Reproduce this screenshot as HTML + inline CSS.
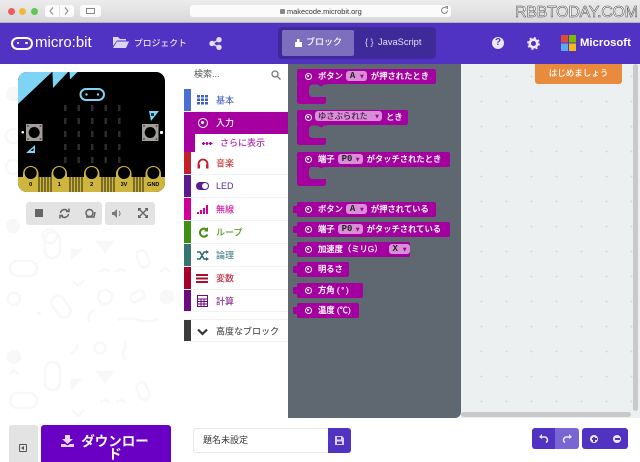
<!DOCTYPE html>
<html><head><meta charset="utf-8">
<style>
*{box-sizing:border-box}
html,body{margin:0;padding:0;width:640px;height:462px;overflow:hidden;background:#fff;font-family:"Liberation Sans","Noto Sans CJK JP",sans-serif}
.a{position:absolute}
.ti{position:absolute;left:184px;width:104px;border-bottom:1px solid #f3f3f3;background:#fff;font-size:9px;font-weight:500}
.ti .bar{position:absolute;left:0;top:0;bottom:0;width:7px}
.ti .t{position:absolute;left:32px;top:50%;transform:translateY(-50%);white-space:nowrap}
.ti svg{position:absolute;left:12px;top:4px}
.blk{position:absolute;left:297px;height:15px;background:#a400a0;color:#fff;font-size:8.3px;font-weight:500;line-height:15px;white-space:nowrap;border-radius:2px;-webkit-text-stroke:.15px #fff}
.blk .ic{position:absolute;left:8px;top:4px;width:7px;height:7px;border:1.1px solid #fff;border-radius:50%}
.blk .ic:after{content:"";position:absolute;left:1.4px;top:1.4px;width:2px;height:2px;border-radius:50%;background:#fff}
.blk .t{position:absolute;left:21px;top:0}
.blk.o:before{content:"";position:absolute;left:-4px;top:4px;width:4px;height:7px;background:#a400a0;border-radius:1px 0 0 1px}
.dd{display:inline-block;position:relative;background:#d98fd6;color:#222;border-radius:3px;height:10px;line-height:10px;width:21px;padding-left:4px;font-family:"Liberation Mono",monospace;font-size:9px;margin:0 4px 0 3px;vertical-align:1px;font-weight:bold;-webkit-text-stroke:0}
.dd i{position:absolute;right:3px;top:1px;font-style:normal;color:#a400a0;font-size:5px;font-family:"DejaVu Sans",sans-serif;font-weight:normal}
.cs{position:absolute;left:297px}
.gray{position:absolute;background:#e3e3e3;border-radius:3px}
</style></head><body>

<!-- background doodles left -->
<svg class="a" style="left:0;top:0" width="184" height="462" fill="none" stroke="#f8f8f8" stroke-width="2.500">
<circle cx="13" cy="94" r="6" fill="#f8f8f8"/><circle cx="13" cy="136" r="7"/><circle cx="13" cy="167" r="7"/>
<circle cx="13" cy="226" r="6" fill="#f8f8f8"/><circle cx="50" cy="236" r="7"/>
<rect x="45" y="232" width="15" height="26" rx="7.500"/><rect x="10" y="261" width="27" height="15" rx="7.500"/>
<path d="M72 280l6 6 6-6M100 272q5-5 10 0M116 272q5-5 10 0"/>
<path d="M72 250h8l-8 8zM98 242h14l-7 10z" fill="#f8f8f8"/>
<rect x="138" y="250" width="10" height="18" rx="5" transform="rotate(-20 143 259)"/>
<path d="M160 272l5-4 5 4" />
<circle cx="14" cy="299" r="6"/>
<rect x="54" y="295" width="13" height="24" rx="6.500" transform="rotate(-35 60 306)"/>
<path d="M37 312l4 3"/>
<circle cx="105" cy="297" r="7"/>
<rect x="130" y="292" width="15" height="9" rx="4.500" transform="rotate(-30 137 297)"/>
<circle cx="167" cy="297" r="6" fill="#f8f8f8"/>
<path d="M95 310q-8 3-6 12M118 320q10-3 20 0t20-1"/>
<path d="M78 344q-2 8-8 10M124 340q3 6 0 10t2 10"/>
<circle cx="100" cy="348" r="5.500"/>
<circle cx="14" cy="357" r="6" fill="#f8f8f8"/><path d="M10 374l4-4 4 4"/>
<rect x="45" y="362" width="15" height="28" rx="7.500"/>
<path d="M72 380h8l-8 8zM98 372h14l-7 10z" fill="#f8f8f8"/>
<rect x="138" y="382" width="10" height="18" rx="5" transform="rotate(-20 143 391)"/>
<rect x="10" y="393" width="27" height="15" rx="7.500"/>
<path d="M72 410l6 6 6-6M100 403q5-5 10 0M116 403q5-5 10 0"/>
</svg>

<!-- safari bar -->
<div class="a" style="left:0;top:0;width:640px;height:23px;background:linear-gradient(#ececec,#d8d8d8);border-bottom:1px solid #b5b5b5"></div>
<div class="a" style="left:7.500px;top:7.500px;width:7px;height:7px;border-radius:50%;background:#ee5a5e"></div>
<div class="a" style="left:19px;top:7.500px;width:7px;height:7px;border-radius:50%;background:#f0b93a"></div>
<div class="a" style="left:30.500px;top:7.500px;width:7px;height:7px;border-radius:50%;background:#5fc650"></div>
<div class="a" style="left:45px;top:5px;width:29px;height:12px;background:#fbfbfb;border-radius:3px"></div>
<svg class="a" style="left:45px;top:5px" width="29" height="12" fill="none" stroke="#888" stroke-width="1"><path d="M8 2.500L5 6l3 3.500M20 2.500L23 6l-3 3.500"/><path d="M14.500 0v12" stroke="#e2e2e2"/></svg>
<div class="a" style="left:80px;top:5px;width:21px;height:12px;background:#fbfbfb;border-radius:3px"><div class="a" style="left:6px;top:3px;width:9px;height:6px;border:1px solid #888"></div></div>
<div class="a" style="left:190px;top:5px;width:261px;height:12px;background:#fbfbfb;border-radius:3px"></div>
<div class="a" style="left:280px;top:8.500px;width:5px;height:5px;background:#888;border-radius:1px"></div>
<div class="a" style="left:287px;top:5px;font-size:7.400px;line-height:13px;color:#333;white-space:nowrap">makecode.microbit.org</div>
<svg class="a" style="left:440px;top:6px" width="9" height="9" fill="none" stroke="#888" stroke-width="1"><path d="M7.500 4.500a3 3 0 1 1-1-2.300"/><path d="M5.500 0.500h2v2.500" /></svg>
<div class="a" style="left:515px;top:5px;width:125px;font-size:16px;line-height:16px;color:#fff;white-space:nowrap;-webkit-text-stroke:.5px #444;letter-spacing:-.3px">RBBTODAY.COM</div>

<!-- purple header -->
<div class="a" style="left:0;top:23px;width:640px;height:41px;background:#5133c4"></div>
<div class="a" style="left:11px;top:37px;width:22px;height:13px;border:2.200px solid #fff;border-radius:6.500px"><div class="a" style="left:3.500px;top:3px;width:2.400px;height:2.400px;background:#fff;border-radius:50%"></div><div class="a" style="right:3.500px;top:3px;width:2.400px;height:2.400px;background:#fff;border-radius:50%"></div></div>
<div class="a" style="left:35px;top:33px;font-size:15px;line-height:20px;color:#fff">micro:bit</div>
<svg class="a" style="left:113px;top:37px" width="16" height="11" fill="#dcd6f5"><path d="M0 0h5l2 2h6v1.500H4L0 9zM4 4.500h12L13 11H0z"/></svg>
<div class="a" style="left:134px;top:36px;font-size:8.800px;line-height:14px;color:#e4dff8;font-weight:500">プロジェクト</div>
<svg class="a" style="left:209px;top:37px" width="13" height="13" fill="#e4dff8" stroke="#e4dff8"><circle cx="3" cy="6.500" r="2.200"/><circle cx="10" cy="2.700" r="2.200"/><circle cx="10" cy="10.300" r="2.200"/><path d="M3 6.500L10 2.700M3 6.500L10 10.300" stroke-width="1.400"/></svg>

<div class="a" style="left:278px;top:27px;width:158px;height:32px;background:#3f2a99;border-radius:4px"></div>
<div class="a" style="left:282px;top:30px;width:72px;height:26px;background:#7d6fbd;border-radius:2px"></div>
<svg class="a" style="left:295px;top:39px" width="7" height="8" fill="#fff"><path d="M0 3h2V0h2.500v3H7v5H0z"/></svg>
<div class="a" style="left:306px;top:36px;font-size:9px;line-height:13px;color:#fff;font-weight:500">ブロック</div>
<div class="a" style="left:365px;top:36px;font-size:9px;line-height:13px;color:#dcd6f5;white-space:nowrap">{ }</div>
<div class="a" style="left:378px;top:36px;font-size:9.300px;line-height:13px;color:#e4dff8;white-space:nowrap">JavaScript</div>

<div class="a" style="left:492px;top:37px;width:12px;height:12px;border-radius:50%;background:#ede9fb;color:#5133c4;font-size:10px;font-weight:bold;line-height:12px;text-align:center">?</div>
<svg class="a" style="left:527px;top:37px" width="13" height="13"><circle cx="6.500" cy="6.500" r="3.800" fill="none" stroke="#ede9fb" stroke-width="2.600"/><circle cx="6.500" cy="6.500" r="5.200" fill="none" stroke="#ede9fb" stroke-width="2.400" stroke-dasharray="2 2.100"/></svg>
<svg class="a" style="left:561px;top:35px" width="15" height="16"><rect width="7" height="7.500" fill="#e04a3a"/><rect x="8" width="7" height="7.500" fill="#7fba00"/><rect y="8.500" width="7" height="7.500" fill="#5aa9ee"/><rect x="8" y="8.500" width="7" height="7.500" fill="#f5ba14"/></svg>
<div class="a" style="left:580px;top:34px;font-size:11.300px;line-height:18px;color:#fff;font-weight:bold">Microsoft</div>

<!-- workspace -->
<div class="a" style="left:461px;top:64px;width:179px;height:354px;background-color:#ecf0f1;background-image:radial-gradient(#d6dadb .8px,transparent 1.100px);background-size:25px 25px;background-position:8px 0"></div>
<div class="a" style="left:535px;top:64px;width:87px;height:20px;background:#e98b3c;border-radius:0 0 3px 3px;color:#fff;font-size:8.500px;font-weight:500;line-height:19px;text-align:center">はじめましょう</div>
<div class="a" style="left:461px;top:412px;width:170px;height:5px;background:#c9c9c9;border-radius:3px"></div>
<div class="a" style="left:633px;top:64px;width:5px;height:347px;background:#c9c9c9;border-radius:3px"></div>

<!-- flyout -->
<div class="a" style="left:288px;top:64px;width:173px;height:354px;background:#5f6770;border-radius:0 0 6px 0"></div>

<!-- board -->
<svg class="a" style="left:18px;top:72px" width="148" height="122" font-family="Liberation Sans" font-weight="bold" font-size="5.500">
<defs><clipPath id="cp"><rect width="147" height="120" rx="9"/></clipPath></defs>
<g clip-path="url(#cp)">
<rect width="147" height="120" fill="#000"/>
<path d="M0 0h34L0 32zM34.500 0H50L35 16zM51.500 0h8L52 7.500z" fill="#7fd4f5"/>
<path d="M0 105h147v15H0z" fill="#cdb53f"/>
<g stroke="#000" stroke-width=".8"><path d="M21 105v15M24 105v15M27 105v15M30 105v15M33 105v15M52 105v15M55 105v15M58 105v15M61 105v15M64 105v15M84 105v15M87 105v15M90 105v15M93 105v15M96 105v15M116 105v15M119 105v15M122 105v15M125 105v15"/></g>
<g fill="#cdb53f"><rect x="5" y="94" width="15.500" height="26" rx="7.700"/><rect x="33.500" y="94" width="15.500" height="26" rx="7.700"/><rect x="66" y="94" width="15.500" height="26" rx="7.700"/><rect x="98" y="94" width="15.500" height="26" rx="7.700"/><rect x="127.500" y="94" width="15.500" height="26" rx="7.700"/></g>
<g fill="#000"><circle cx="12.700" cy="101" r="6"/><circle cx="41.300" cy="101" r="6"/><circle cx="73.700" cy="101" r="6"/><circle cx="106" cy="101" r="6"/><circle cx="135.300" cy="101" r="6"/></g>
<g fill="#000" text-anchor="middle"><text x="12.700" y="114">0</text><text x="41.300" y="114">1</text><text x="73.700" y="114">2</text><text x="106" y="114">3V</text><text x="135.300" y="114">GND</text></g>
</g>
<rect x="62.500" y="17" width="23.500" height="11" rx="5.500" fill="none" stroke="#7fd4f5" stroke-width="2"/>
<circle cx="68.500" cy="22.500" r="1.200" fill="#7fd4f5"/><circle cx="80" cy="22.500" r="1.200" fill="#7fd4f5"/>
<g fill="#2c2c2c"><rect x="46" y="33" width="2.500" height="6"/><rect x="59.500" y="33" width="2.500" height="6"/><rect x="73" y="33" width="2.500" height="6"/><rect x="86.500" y="33" width="2.500" height="6"/><rect x="100" y="33" width="2.500" height="6"/><rect x="46" y="46" width="2.500" height="6"/><rect x="59.500" y="46" width="2.500" height="6"/><rect x="73" y="46" width="2.500" height="6"/><rect x="86.500" y="46" width="2.500" height="6"/><rect x="100" y="46" width="2.500" height="6"/><rect x="46" y="59" width="2.500" height="6"/><rect x="59.500" y="59" width="2.500" height="6"/><rect x="73" y="59" width="2.500" height="6"/><rect x="86.500" y="59" width="2.500" height="6"/><rect x="100" y="59" width="2.500" height="6"/><rect x="46" y="72" width="2.500" height="6"/><rect x="59.500" y="72" width="2.500" height="6"/><rect x="73" y="72" width="2.500" height="6"/><rect x="86.500" y="72" width="2.500" height="6"/><rect x="100" y="72" width="2.500" height="6"/><rect x="46" y="85" width="2.500" height="6"/><rect x="59.500" y="85" width="2.500" height="6"/><rect x="73" y="85" width="2.500" height="6"/><rect x="86.500" y="85" width="2.500" height="6"/><rect x="100" y="85" width="2.500" height="6"/></g>
<rect x="8" y="52" width="16.500" height="17" fill="#a29e9b"/><circle cx="16.200" cy="60.500" r="5.500" fill="#000"/>
<g fill="#6d4a46"><circle cx="10" cy="54" r="1"/><circle cx="22.500" cy="54" r="1"/><circle cx="10" cy="67" r="1"/><circle cx="22.500" cy="67" r="1"/></g>
<rect x="124" y="52" width="16.500" height="17" fill="#a29e9b"/><circle cx="132.200" cy="60.500" r="5.500" fill="#000"/>
<g fill="#6d4a46"><circle cx="126" cy="54" r="1"/><circle cx="138.500" cy="54" r="1"/><circle cx="126" cy="67" r="1"/><circle cx="138.500" cy="67" r="1"/></g>
<path d="M8 81h9v-8z" fill="#7fd4f5"/><path d="M12.500 79h3v-3z" fill="#000"/>
<path d="M131 39h10l-8 10z" fill="#7fd4f5"/><rect x="133" y="41" width="3" height="3" fill="#1a3a4a"/>
<rect x="3.500" y="59" width="2.500" height="2.500" rx="1" fill="#fff"/><rect x="142" y="59" width="3" height="3" rx="1" fill="#fff"/>
</svg>

<!-- sim toolbar -->
<div class="gray" style="left:26px;top:202px;width:76px;height:23px"></div>
<div class="gray" style="left:105px;top:202px;width:50px;height:23px"></div>
<div class="a" style="left:35px;top:209px;width:8px;height:8px;background:#666"></div>
<svg class="a" style="left:59px;top:208px" width="11" height="11" fill="none" stroke="#666" stroke-width="1.500"><path d="M1.500 5a4 4 0 0 1 7-2M9.500 6a4 4 0 0 1-7 2"/><path d="M7 3.500h3V.5M4 7.500H1v3"/></svg>
<svg class="a" style="left:85px;top:208px" width="11" height="10" fill="none" stroke="#666" stroke-width="1.500"><circle cx="4.500" cy="5" r="3.500"/><path d="M1 9h8l1-5"/></svg>
<svg class="a" style="left:112px;top:209px" width="11" height="9" fill="#777"><path d="M0 3h2l3-3v9L2 6H0z"/><path d="M7 2q2 2.500 0 5" fill="none" stroke="#777"/></svg>
<svg class="a" style="left:138px;top:208px" width="10" height="10" fill="none" stroke="#666" stroke-width="1.300"><path d="M1 1l8 8M9 1l-8 8"/><path d="M.5 3V.5H3M7 .5h2.500V3M.5 7v2.500H3M7 9.500h2.500V7" stroke-width="1.500"/></svg>

<!-- toolbox -->
<div class="a" style="left:184px;top:64px;width:104px;height:25px;background:#fff"></div>
<div class="a" style="left:194px;top:68px;font-size:9px;line-height:13px;color:#555">検索...</div>
<svg class="a" style="left:271px;top:70px" width="10" height="10" fill="none" stroke="#777" stroke-width="1.300"><circle cx="4" cy="4" r="3"/><path d="M6.500 6.500L9.500 9.500"/></svg>

<div class="ti" style="top:89px;height:23px;color:#5770c8"><div class="bar" style="background:#4c6fd1"></div><svg width="12" height="12" style="top:6px;left:13px" fill="#3f5fbe"><path d="M0 0h3v2.500H0zM4 0h3v2.500H4zM8 0h3v2.500H8zM0 3.500h3V6H0zM4 3.500h3V6H4zM8 3.500h3V6H8zM0 7h3v2.500H0zM4 7h3v2.500H4zM8 7h3v2.500H8z"/></svg><span class="t">基本</span></div>
<div class="a" style="left:184px;top:112px;width:104px;height:22px;background:#a600a1;color:#fff;font-size:9px;font-weight:500"><div class="a" style="left:14px;top:6px;width:10px;height:10px;border:1.800px solid #fff;border-radius:50%"><div class="a" style="left:1.700px;top:1.700px;width:3px;height:3px;border-radius:50%;background:#fff"></div></div><span class="a" style="left:32px;top:4px;white-space:nowrap;line-height:14px">入力</span></div>
<div class="a" style="left:184px;top:134px;width:104px;height:18px;background:#fff"><div class="a" style="left:0;top:0;width:11px;height:18px;background:#a600a1"></div><div class="a" style="left:18px;top:7.500px;width:10.500px;height:3px;background:radial-gradient(circle at 1.500px 1.500px,#a600a1 1.300px,transparent 1.500px) 0 0/3.500px 3px"></div><span class="a" style="left:36px;top:2px;font-size:9px;line-height:14px;color:#b02eab;font-weight:500;white-space:nowrap">さらに表示</span></div>
<div class="ti" style="top:152px;height:23px;color:#cf3f3f"><div class="bar" style="background:#c4202c"></div><svg width="12" height="12" style="top:6px;left:13px" fill="none" stroke="#c4202c" stroke-width="1.800"><path d="M1.500 8V6a4.500 4.500 0 0 1 9 0v2"/><rect x=".5" y="6.500" width="2.500" height="4" fill="#c4202c" stroke="none"/><rect x="9" y="6.500" width="2.500" height="4" fill="#c4202c" stroke="none"/></svg><span class="t">音楽</span></div>
<div class="ti" style="top:175px;height:23px;color:#5c2d91"><div class="bar" style="background:#5c1a8f"></div><div class="a" style="left:12px;top:7px;width:13px;height:8px;background:#5c1a8f;border-radius:4px"><div class="a" style="right:1px;top:1px;width:6px;height:6px;border-radius:50%;background:#fff"></div></div><span class="t">LED</span></div>
<div class="ti" style="top:198px;height:23px;color:#d024a4"><div class="bar" style="background:#d1009b"></div><svg width="13" height="12" style="top:6px" fill="#d1009b"><rect x="1" y="8" width="2" height="2"/><rect x="4" y="6" width="2" height="4"/><rect x="7" y="4" width="2" height="6"/><rect x="10" y="1" width="2" height="9"/></svg><span class="t">無線</span></div>
<div class="ti" style="top:221px;height:23px;color:#4f9a20"><div class="bar" style="background:#3f8f14"></div><svg width="12" height="12" style="top:6px;left:14px" fill="none" stroke="#3f8f14" stroke-width="2"><path d="M9.500 7.500a4 4 0 1 1-.5-4.500"/><path d="M10 0v4.500H6" fill="#3f8f14" stroke="none"/></svg><span class="t">ループ</span></div>
<div class="ti" style="top:244px;height:23px;color:#5b8a8f"><div class="bar" style="background:#3a7373"></div><svg width="13" height="11" style="top:6px" fill="none" stroke="#2f6a6f" stroke-width="1.500"><path d="M1 2h3l4 7h3M1 9h3l4-7h3"/><path d="M10 0l3 2-3 2zM10 7l3 2-3 2z" fill="#2f6a6f" stroke="none"/></svg><span class="t">論理</span></div>
<div class="ti" style="top:267px;height:23px;color:#c0304a"><div class="bar" style="background:#a6002a"></div><svg width="12" height="11" style="top:6px" fill="#a8102e"><rect y="1" width="12" height="2"/><rect y="4.500" width="12" height="2"/><rect y="8" width="12" height="2"/></svg><span class="t">変数</span></div>
<div class="ti" style="top:290px;height:22px;color:#8a3a92"><div class="bar" style="background:#6c0b80"></div><svg width="11" height="12" style="top:5px;left:13px" fill="none" stroke="#6c0b80" stroke-width="1"><rect x=".5" y=".5" width="10" height="11"/><path d="M.5 4h10M.5 6.500h10M.5 9h10M4 4v7.500M7 4v7.500"/></svg><span class="t">計算</span></div>
<div class="ti" style="top:319px;height:23px;color:#555;border-top:1px solid #f3f3f3"><div class="bar" style="background:#3c3c3c"></div><svg width="11" height="8" style="top:8px;left:13px" fill="none" stroke="#333" stroke-width="2.200"><path d="M1 1.500l4.500 4.500 4.500-4.500"/></svg><span class="t">高度なブロック</span></div>

<!-- blocks -->
<div class="blk" style="top:69px;width:139px"><span class="ic"></span><span class="t">ボタン<span class="dd">A<i>▼</i></span>が押されたとき</span></div>
<svg class="cs" style="top:84px" width="30" height="20" fill="#a400a0"><path d="M0 0H30V.5H27Q24 4 21 .5H16Q12 .5 12 5V9Q12 13 16 13H29V17Q29 20 26 20H3Q0 20 0 17Z"/></svg>

<div class="blk" style="top:110px;width:111px"><span class="ic"></span><span class="t" style="left:18px"><span class="dd" style="width:67px;margin-left:0;padding-left:3px;color:#4a1a4a;font-family:'Liberation Sans','Noto Sans CJK JP',sans-serif;font-size:8.300px;font-weight:500">ゆさぶられた<i>▼</i></span>とき</span></div>
<svg class="cs" style="top:125px" width="30" height="20" fill="#a400a0"><path d="M0 0H30V.5H27Q24 4 21 .5H16Q12 .5 12 5V9Q12 13 16 13H29V17Q29 20 26 20H3Q0 20 0 17Z"/></svg>

<div class="blk" style="top:152px;width:153px"><span class="ic"></span><span class="t">端子<span class="dd" style="width:25px">P0<i>▼</i></span>がタッチされたとき</span></div>
<svg class="cs" style="top:166px" width="30" height="20" fill="#a400a0"><path d="M0 0H30V.5H27Q24 4 21 .5H16Q12 .5 12 5V9Q12 13 16 13H29V17Q29 20 26 20H3Q0 20 0 17Z"/></svg>

<div class="blk o" style="top:202px;width:139px"><span class="ic"></span><span class="t">ボタン<span class="dd">A<i>▼</i></span>が押されている</span></div>
<div class="blk o" style="top:222px;width:153px"><span class="ic"></span><span class="t">端子<span class="dd" style="width:25px">P0<i>▼</i></span>がタッチされている</span></div>
<div class="blk o" style="top:242px;width:113px"><span class="ic"></span><span class="t">加速度（ミリG）<span class="dd" style="margin-left:6px">X<i>▼</i></span></span></div>
<div class="blk o" style="top:262px;width:52px"><span class="ic"></span><span class="t">明るさ</span></div>
<div class="blk o" style="top:283px;width:66px"><span class="ic"></span><span class="t">方角 <span style="letter-spacing:1.500px">(°)</span></span></div>
<div class="blk o" style="top:303px;width:62px"><span class="ic"></span><span class="t">温度 (℃)</span></div>

<!-- bottom bar -->
<div class="a" style="left:9px;top:425px;width:29px;height:37px;background:#e3e3e3;border-radius:3px 3px 0 0"></div>
<div class="a" style="left:19px;top:444px;width:8px;height:8px;border:1.300px solid #555;border-radius:1px"><div class="a" style="left:.5px;top:.7px;width:0;height:0;border:2px solid transparent;border-right:3px solid #555;border-left:0"></div></div>
<div class="a" style="left:41px;top:425px;width:130px;height:37px;background:#6a00c4;border-radius:3px 3px 0 0;overflow:hidden"></div>
<svg class="a" style="left:61px;top:435px" width="13" height="12" fill="#e8d8f8"><path d="M4 0h5v4h3L6.500 9 1 4h3zM0 9h4l2.500 1.500L9 9h4v3H0z"/></svg>
<div class="a" style="left:79px;top:435px;width:72px;font-size:13.500px;line-height:13px;color:#fff;font-weight:bold;text-align:center;word-break:break-all">ダウンロード</div>
<div class="a" style="left:193px;top:428px;width:136px;height:25px;background:#fff;border:1px solid #e8e8e8;border-radius:3px 0 0 3px;font-size:9px;line-height:23px;color:#333;padding-left:9px">題名未設定</div>
<div class="a" style="left:328px;top:428px;width:23px;height:25px;background:#5133c4;border-radius:0 3px 3px 0"></div>
<svg class="a" style="left:335px;top:436px" width="9" height="9" fill="#d8d0f5"><path d="M0 0h7l2 2v7H0z"/><rect x="2" y="1" width="4" height="2.500" fill="#5133c4"/><rect x="2" y="5.500" width="5" height="2.500" fill="#5133c4"/></svg>
<div class="a" style="left:532px;top:428px;width:24px;height:21px;background:#5133c4;border-radius:3px 0 0 3px"></div>
<div class="a" style="left:555px;top:428px;width:24px;height:21px;background:#7a66d2;border-radius:0 3px 3px 0"></div>
<div class="a" style="left:582px;top:428px;width:46px;height:21px;background:#5133c4;border-radius:3px"></div>
<svg class="a" style="left:539px;top:434px" width="10" height="9" fill="none" stroke="#ece8fb" stroke-width="1.500"><path d="M2 3h4a3 3 0 0 1 1 5.500"/><path d="M3 0v5L0 3z" fill="#ece8fb" stroke="none"/></svg>
<svg class="a" style="left:562px;top:434px" width="10" height="9" fill="none" stroke="#ece8fb" stroke-width="1.500"><path d="M8 3H4a3 3 0 0 0-1 5.500"/><path d="M7 0v5l3-2z" fill="#ece8fb" stroke="none"/></svg>
<div class="a" style="left:590px;top:435px;width:8px;height:8px;border-radius:50%;background:#ece8fb"><div class="a" style="left:1.500px;top:3.200px;width:5px;height:1.600px;background:#5133c4"></div><div class="a" style="left:3.200px;top:1.500px;width:1.600px;height:5px;background:#5133c4"></div></div>
<div class="a" style="left:613px;top:435px;width:8px;height:8px;border-radius:50%;background:#ece8fb"><div class="a" style="left:1.500px;top:3.200px;width:5px;height:1.600px;background:#5133c4"></div></div>
</body></html>
